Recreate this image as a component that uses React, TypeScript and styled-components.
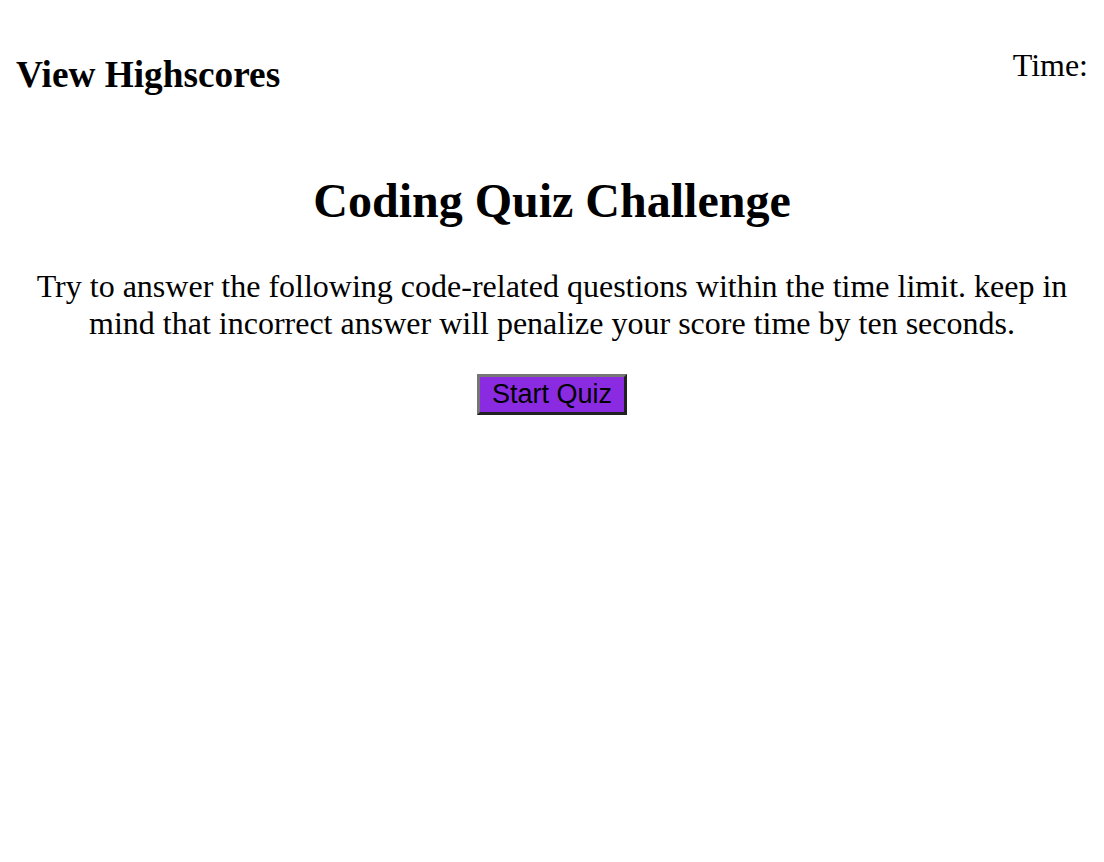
import React from "react";
import styled, { createGlobalStyle } from "styled-components";

const Global = createGlobalStyle`
  body { margin: 8px; font-family: "Liberation Serif", "Times New Roman", serif; color: #000; background: #fff; }
`;

const Header = styled.header`
  display: flex;
  justify-content: space-between;
  align-items: flex-start;
  padding: 0 8px;
`;

const HighscoreLink = styled.h2`
  font-size: 37.3px;
  font-weight: bold;
  margin: 45px 0 0;
`;

const Timer = styled.div`
  font-size: 32px;
  margin-top: 39px;
`;

const Main = styled.main`
  text-align: center;
`;

const Title = styled.h1`
  font-size: 48px;
  margin: 77px 0 0;
`;

const Intro = styled.p`
  font-size: 32px;
  margin: 40px 0 32px;
`;

const StartButton = styled.button`
  font-family: "Liberation Sans", Arial, sans-serif;
  font-size: 27px;
  background: #8a2be2;
  color: #000;
  border: 3px outset #767676;
  padding: 2px 12px;
`;

export default function App() {
  return (
    <>
      <Global />
      <Header>
        <HighscoreLink>View Highscores</HighscoreLink>
        <Timer>Time:</Timer>
      </Header>
      <Main>
        <Title>Coding Quiz Challenge</Title>
        <Intro>
          Try to answer the following code-related questions within the time limit. keep in mind that incorrect answer will penalize your score time by ten seconds.
        </Intro>
        <StartButton>Start Quiz</StartButton>
      </Main>
    </>
  );
}
